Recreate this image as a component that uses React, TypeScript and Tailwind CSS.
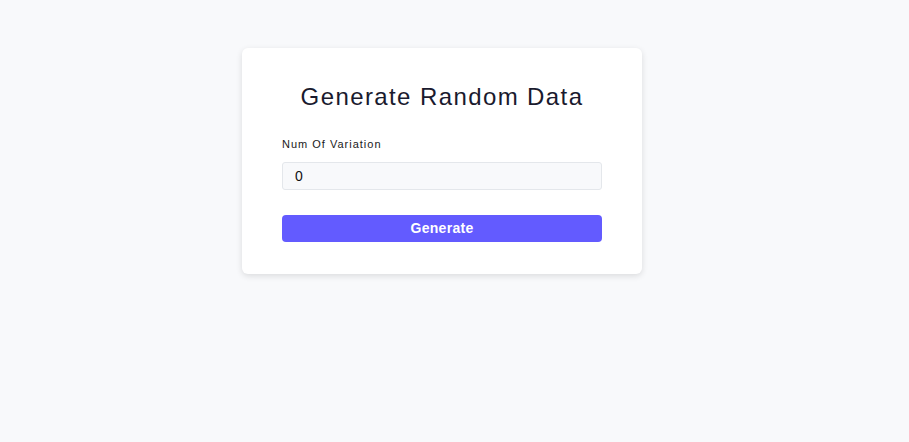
import { useState } from 'react';

export default function App() {
  const [count, setCount] = useState('0');

  return (
    <div
      className="min-h-screen w-full bg-[#f8f9fb] pt-12 pr-[25px]"
      style={{ fontFamily: '"Liberation Sans", Arial, sans-serif' }}
    >
      <div className="mx-auto w-[400px] rounded-md bg-white px-10 pt-[34px] pb-8 shadow-[0_2px_6px_rgba(0,0,0,0.12)]">
        <h1 className="text-center text-[24px] leading-[30px] tracking-[1.4px] text-[#1a1a2e]">
          Generate Random Data
        </h1>

        <label className="mt-[25px] block text-[11px] leading-[14px] tracking-[1px] text-[#1a1a1a]">
          Num Of Variation
        </label>
        <input
          type="number"
          value={count}
          onChange={(e) => setCount(e.target.value)}
          className="mt-[11px] block h-[28px] w-full rounded-[3px] border border-[#e4e7eb] bg-[#f8f9fb] px-3 text-[14px] text-[#111] outline-none"
        />

        <button className="mt-[25px] block h-[27px] w-full rounded-[4px] bg-[#635bff] text-[14px] font-bold tracking-[0.3px] text-white">
          Generate
        </button>
      </div>
    </div>
  );
}
